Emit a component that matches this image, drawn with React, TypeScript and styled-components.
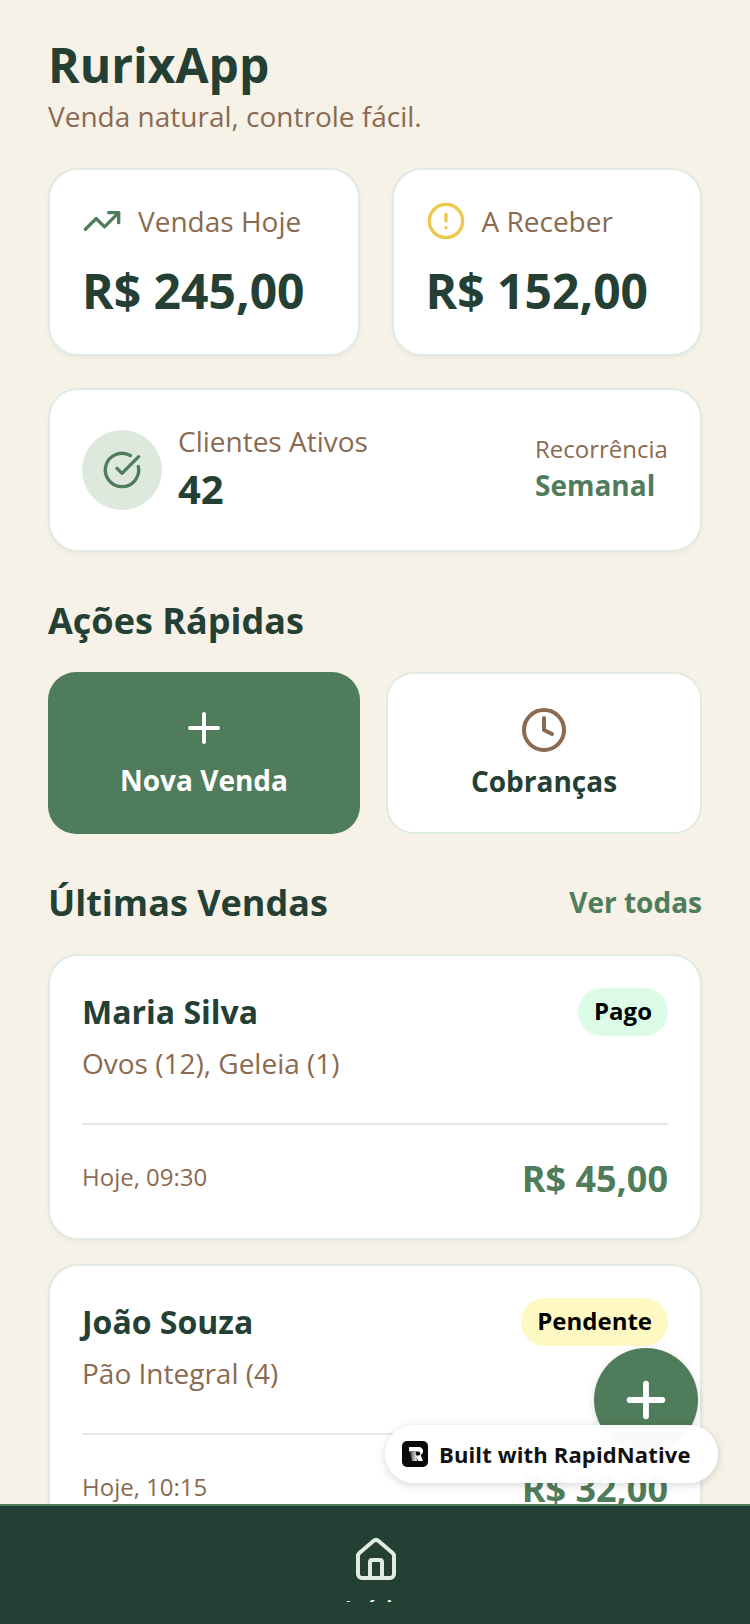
import styled, { createGlobalStyle } from "styled-components";
import { AlertCircle, CircleCheckBig, Clock, House, Plus, TrendingUp } from "lucide-react";

const GlobalStyle = createGlobalStyle`
  html, body {
    margin: 0;
    padding: 0;
    background: #f6f2e8;
  }
  * {
    box-sizing: border-box;
  }
`;

const Screen = styled.div`
  width: 750px;
  height: 1624px;
  position: relative;
  overflow: hidden;
  display: flex;
  flex-direction: column;
  background: #f6f2e8;
  font-family: "Open Sans", sans-serif;
`;

const Scroll = styled.div`
  flex: 1;
  min-height: 0;
  overflow: hidden;
  padding: 31px 48px 0;
`;

const Title = styled.h1`
  margin: 0;
  font-size: 48px;
  line-height: 68px;
  font-weight: 700;
  color: #244034;
`;

const Subtitle = styled.p`
  margin: -1px 0 34px;
  font-size: 28px;
  line-height: 36px;
  color: #8a6a50;
`;

const StatRow = styled.div`
  display: grid;
  grid-template-columns: 312px 310.5px;
  gap: 31.5px;
  margin-bottom: 32px;
`;

const Card = styled.div`
  background: #fff;
  border: 2px solid #e0ebe2;
  border-radius: 30px;
  box-shadow: 0 2px 4px rgba(36, 64, 52, 0.05);
`;

const StatCard = styled(Card)`
  height: 188px;
  padding: 31px 32px 0;
`;

const StatLabel = styled.div`
  display: flex;
  align-items: center;
  gap: 16px;
  height: 40px;
  font-size: 28px;
  color: #8a6a50;
`;

const StatValue = styled.div`
  margin-top: 16px;
  font-size: 48px;
  line-height: 68px;
  font-weight: 700;
  color: #244034;
`;

const ClientCard = styled(Card)`
  height: 164px;
  padding: 0 32px;
  display: flex;
  align-items: center;
  justify-content: space-between;
`;

const ClientInfo = styled.div`
  display: flex;
  align-items: center;
  gap: 16px;
`;

const IconCircle = styled.div`
  width: 80px;
  height: 80px;
  border-radius: 50%;
  background: #dde9dd;
  color: #4f7c5a;
  display: flex;
  align-items: center;
  justify-content: center;
`;

const ClientText = styled.div`
  padding-bottom: 4px;
`;

const ClientLabel = styled.div`
  margin-bottom: 2px;
  font-size: 28px;
  line-height: 40px;
  color: #8a6a50;
`;

const ClientCount = styled.div`
  font-size: 40px;
  line-height: 52px;
  font-weight: 700;
  color: #244034;
`;

const Recurrence = styled.div`
  width: 133px;
  padding-bottom: 6px;
`;

const RecurrenceLabel = styled.div`
  font-size: 24px;
  line-height: 36px;
  color: #8a6a50;
`;

const RecurrenceValue = styled.div`
  font-size: 28px;
  line-height: 36px;
  font-weight: 700;
  color: #4f7c5a;
`;

const SectionTitle = styled.h2`
  margin: 44px 0 26px;
  font-size: 36px;
  line-height: 50px;
  font-weight: 700;
  color: #244034;
`;

const ActionRow = styled.div`
  display: flex;
  gap: 26px;
`;

const ActionButton = styled.div<{ $primary?: boolean }>`
  flex: 1;
  height: 162px;
  border-radius: 28px;
  display: flex;
  flex-direction: column;
  align-items: center;
  justify-content: center;
  gap: 8px;
  padding-bottom: ${(p) => (p.$primary ? "2px" : "0")};
  background: ${(p) => (p.$primary ? "#4f7c5a" : "#fff")};
  border: ${(p) => (p.$primary ? "none" : "2px solid #e0ebe2")};
  color: ${(p) => (p.$primary ? "#fff" : "#244034")};
  font-size: 28px;
  line-height: 40px;
  font-weight: 700;
`;

const ActionClock = styled(Clock)`
  margin: 1px 0 -1px;
`;

const SalesHeader = styled.div`
  display: flex;
  align-items: center;
  justify-content: space-between;
  margin: 44px 0 26px;
`;

const SalesTitle = styled.h2`
  margin: 0;
  font-size: 36px;
  line-height: 50px;
  font-weight: 700;
  color: #244034;
`;

const SeeAll = styled.span`
  padding-bottom: 2px;
  font-size: 28px;
  font-weight: 700;
  color: #4f7c5a;
`;

const SaleCard = styled(Card)`
  padding: 32px 32px 34px;
  margin-bottom: 24px;
`;

const SaleTop = styled.div`
  display: flex;
  align-items: flex-start;
  justify-content: space-between;
`;

const SaleName = styled.div`
  font-size: 32px;
  line-height: 48px;
  font-weight: 700;
  color: #244034;
`;

const SaleItems = styled.div`
  margin-top: 7px;
  font-size: 28px;
  line-height: 40px;
  color: #8a6a50;
`;

const Badge = styled.span<{ $bg: string }>`
  padding: 0 16px 3px;
  height: 48px;
  border-radius: 24px;
  display: flex;
  align-items: center;
  background: ${(p) => p.$bg};
  font-size: 24px;
  font-weight: 700;
  color: #000;
`;

const SaleBottom = styled.div`
  margin-top: 40px;
  padding-top: 28px;
  border-top: 2px solid #e0ebe2;
  display: flex;
  align-items: center;
  justify-content: space-between;
`;

const SaleTime = styled.span`
  padding-bottom: 5px;
  font-size: 24px;
  color: #8a6a50;
`;

const SaleAmount = styled.span`
  padding-top: 1px;
  font-size: 36px;
  line-height: 50px;
  font-weight: 700;
  color: #4f7c5a;
`;

const Fab = styled.div`
  position: absolute;
  left: 594px;
  top: 1348px;
  width: 104px;
  height: 104px;
  border-radius: 50%;
  background: #4f7c5a;
  color: #fff;
  display: flex;
  align-items: center;
  justify-content: center;
  box-shadow: 0 2px 8px rgba(0, 0, 0, 0.12);
`;

const BuiltPill = styled.div`
  position: absolute;
  left: 385px;
  top: 1425px;
  width: 333px;
  height: 58px;
  border-radius: 29px;
  background: rgba(255, 255, 255, 0.97);
  box-shadow: 0 2px 10px rgba(0, 0, 0, 0.16);
  display: flex;
  align-items: center;
  gap: 11px;
  padding-left: 17px;
  font-size: 22px;
  font-weight: 700;
  letter-spacing: 0.14px;
  color: #111;
`;

const BottomNav = styled.nav`
  height: 120px;
  flex-shrink: 0;
  background: #244034;
  border-top: 2px solid #4f7c5a;
  display: flex;
  flex-direction: column;
  align-items: center;
  padding: 30px 0 0 2px;
  color: #e0ebe2;
`;

const NavLabelClip = styled.div`
  height: 3px;
  margin-top: 15px;
  overflow: hidden;
`;

const NavLabel = styled.div`
  font-size: 24px;
  line-height: 24px;
  margin-top: -2px;
  font-weight: 600;
  color: #fff;
`;

const sales = [
  { name: "Maria Silva", items: "Ovos (12), Geleia (1)", time: "Hoje, 09:30", amount: "R$ 45,00", status: "Pago", bg: "#dcfce7" },
  { name: "João Souza", items: "Pão Integral (4)", time: "Hoje, 10:15", amount: "R$ 32,00", status: "Pendente", bg: "#fef9c3" },
];

function RapidLogo() {
  return (
    <svg width="26" height="26" viewBox="0 0 26 26">
      <defs>
        <linearGradient id="rapidStem" x1="0" y1="0" x2="1" y2="0">
          <stop offset="0" stopColor="#444" />
          <stop offset="1" stopColor="#fff" />
        </linearGradient>
      </defs>
      <rect width="26" height="26" rx="5" fill="#0a0a0a" />
      <path d="M7 6h10a4.2 4.2 0 0 1 1.6 8L21 20h-4.6l-3.4-5.6h3.4a1.7 1.7 0 0 0 0-3.8H7z" fill="#fff" />
      <path d="M8 10.6h5.5L15 20H10z" fill="url(#rapidStem)" />
    </svg>
  );
}

export default function App() {
  return (
    <Screen>
      <GlobalStyle />
      <Scroll>
        <Title>RurixApp</Title>
        <Subtitle>Venda natural, controle fácil.</Subtitle>

        <StatRow>
          <StatCard>
            <StatLabel>
              <TrendingUp size={40} color="#4f7c5a" strokeWidth={2} />
              Vendas Hoje
            </StatLabel>
            <StatValue>R$ 245,00</StatValue>
          </StatCard>
          <StatCard>
            <StatLabel>
              <AlertCircle size={40} color="#ecc94b" strokeWidth={2} />
              A Receber
            </StatLabel>
            <StatValue>R$ 152,00</StatValue>
          </StatCard>
        </StatRow>

        <ClientCard>
          <ClientInfo>
            <IconCircle>
              <CircleCheckBig size={40} strokeWidth={2} />
            </IconCircle>
            <ClientText>
              <ClientLabel>Clientes Ativos</ClientLabel>
              <ClientCount>42</ClientCount>
            </ClientText>
          </ClientInfo>
          <Recurrence>
            <RecurrenceLabel>Recorrência</RecurrenceLabel>
            <RecurrenceValue>Semanal</RecurrenceValue>
          </Recurrence>
        </ClientCard>

        <SectionTitle>Ações Rápidas</SectionTitle>
        <ActionRow>
          <ActionButton $primary>
            <Plus size={48} strokeWidth={2} />
            Nova Venda
          </ActionButton>
          <ActionButton>
            <ActionClock size={48} color="#8a6a50" />
            Cobranças
          </ActionButton>
        </ActionRow>

        <SalesHeader>
          <SalesTitle>Últimas Vendas</SalesTitle>
          <SeeAll>Ver todas</SeeAll>
        </SalesHeader>

        {sales.map((s) => (
          <SaleCard key={s.name}>
            <SaleTop>
              <div>
                <SaleName>{s.name}</SaleName>
                <SaleItems>{s.items}</SaleItems>
              </div>
              <Badge $bg={s.bg}>{s.status}</Badge>
            </SaleTop>
            <SaleBottom>
              <SaleTime>{s.time}</SaleTime>
              <SaleAmount>{s.amount}</SaleAmount>
            </SaleBottom>
          </SaleCard>
        ))}
      </Scroll>

      <BottomNav>
        <House size={48} strokeWidth={2} />
        <NavLabelClip>
          <NavLabel>Início</NavLabel>
        </NavLabelClip>
      </BottomNav>

      <Fab>
        <Plus size={56} strokeWidth={2.5} />
      </Fab>
      <BuiltPill>
        <RapidLogo />
        Built with RapidNative
      </BuiltPill>
    </Screen>
  );
}
